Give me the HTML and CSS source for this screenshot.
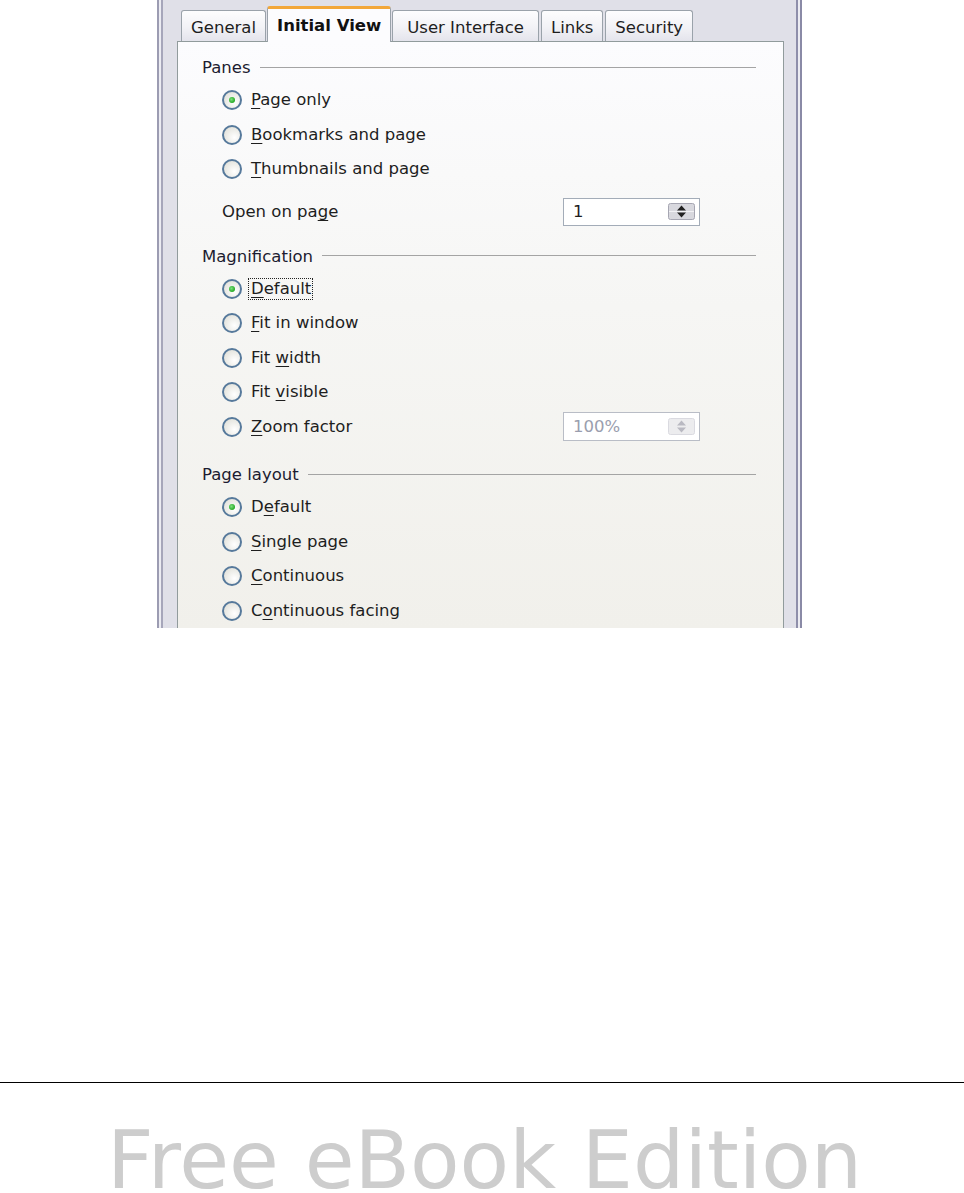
FILE: index.html
```html
<!DOCTYPE html>
<html lang="en">
<head>
    <meta charset="UTF-8">
    <meta name="viewport" content="width=device-width, initial-scale=1.0">
    <title>PDF Options - Initial View</title>
    <link rel="stylesheet" href="styles.css">
</head>
<body>
    <div class="window">
        <div class="window-inner">
            <!-- Tab strip -->
            <div class="tabs">
                <div class="tab">General</div>
                <div class="tab active">Initial View</div>
                <div class="tab wide">User Interface</div>
                <div class="tab">Links</div>
                <div class="tab">Security</div>
            </div>

            <div class="panel">
                <!-- Panes -->
                <div class="group">
                    <div class="group-title">Panes</div>
                    <div class="options">
                        <div class="option"><span class="radio checked"></span><span><u>P</u>age only</span></div>
                        <div class="option"><span class="radio"></span><span><u>B</u>ookmarks and page</span></div>
                        <div class="option"><span class="radio"></span><span><u>T</u>humbnails and page</span></div>
                        <div class="field-row">
                            <span class="field-label">Open on pa<u>g</u>e</span>
                            <div class="spin">
                                <span class="spin-value">1</span>
                                <svg width="27" height="17" viewBox="0 0 27 17">
                                    <rect x="0.5" y="0.5" width="26" height="16" rx="2" fill="#d8d8de" stroke="#a6a6b2"/>
                                    <path d="M1 8.5H26" stroke="#f2f2f5"/>
                                    <path d="M13.5 2.5L18 7.5H9Z M13.5 14.5L18 9.5H9Z" fill="#222"/>
                                </svg>
                            </div>
                        </div>
                    </div>
                </div>

                <!-- Magnification -->
                <div class="group">
                    <div class="group-title">Magnification</div>
                    <div class="options">
                        <div class="option"><span class="radio checked"></span><span class="focus"><u>D</u>efault</span></div>
                        <div class="option"><span class="radio"></span><span><u>F</u>it in window</span></div>
                        <div class="option"><span class="radio"></span><span>Fit <u>w</u>idth</span></div>
                        <div class="option"><span class="radio"></span><span>Fit <u>v</u>isible</span></div>
                        <div class="option">
                            <span class="radio"></span>
                            <span class="field-label"><u>Z</u>oom factor</span>
                            <div class="spin disabled">
                                <span class="spin-value">100%</span>
                                <svg width="27" height="17" viewBox="0 0 27 17">
                                    <rect x="0.5" y="0.5" width="26" height="16" rx="2" fill="#ececee" stroke="#dadae0"/>
                                    <path d="M13.5 2.5L18 7.5H9Z M13.5 14.5L18 9.5H9Z" fill="#b9b9c2"/>
                                </svg>
                            </div>
                        </div>
                    </div>
                </div>

                <!-- Page layout -->
                <div class="group">
                    <div class="group-title">Page layout</div>
                    <div class="options">
                        <div class="option"><span class="radio checked"></span><span>D<u>e</u>fault</span></div>
                        <div class="option"><span class="radio"></span><span><u>S</u>ingle page</span></div>
                        <div class="option"><span class="radio"></span><span><u>C</u>ontinuous</span></div>
                        <div class="option"><span class="radio"></span><span>C<u>o</u>ntinuous facing</span></div>
                    </div>
                </div>
            </div>
        </div>
    </div>

    <div class="footer">Free eBook Edition</div>
</body>
</html>
```

FILE: styles.css
```css
body {
    margin: 0;
    background: #fff;
    font-family: "DejaVu Sans", sans-serif;
}
.window {
    margin-left: 157px;
    width: 645px;
    height: 628px;
    box-sizing: border-box;
    border-left: 2px solid #9c9cb2;
    border-right: 2px solid #8a8aa6;
    padding: 0 2px;
    background: #ececf2;
    overflow: hidden;
}
.window-inner {
    height: 100%;
    box-sizing: border-box;
    border-left: 2px solid #a6a6ba;
    border-right: 2px solid #8e8eaa;
    background: #e0e0e8;
    padding: 0 12px 0 14px;
    display: flex;
    flex-direction: column;
    font-size: 16.5px;
    color: #1e1e1e;
}
.tabs {
    display: flex;
    align-items: flex-end;
    gap: 1px;
    height: 35px;
    padding: 6px 0 0 4px;
}
.tab {
    position: relative;
    height: 31px;
    box-sizing: border-box;
    padding: 4px 9px 0;
    line-height: 26px;
    border: 1px solid #9aa2aa;
    border-bottom: none;
    border-radius: 3px 3px 0 0;
    background: linear-gradient(#fdfdfe, #f2f2f6 55%, #e4e4ec);
    white-space: nowrap;
}
.tab.wide {
    padding: 4px 14px 0;
}
.tab.active {
    height: 36px;
    margin-bottom: -1px;
    z-index: 1;
    font-weight: bold;
    color: #111;
    border-top: 3px solid #f2a73a;
    background: #fcfcfe;
}
.tabs .tab:nth-child(4), .tabs .tab:nth-child(5) {
    margin-left: 1px;
}
.panel {
    flex: 1;
    border: 1px solid #919b9c;
    background: linear-gradient(#fcfcfe, #f6f6f4 45%, #f1f0eb);
    padding: 16px 27px 0 24px;
}
.group + .group {
    margin-top: 21px;
}
.group-title {
    display: flex;
    align-items: center;
    gap: 9px;
    height: 20px;
    line-height: 20px;
    color: #1c1c30;
}
.group-title::after {
    content: "";
    flex: 1;
    border-top: 1px solid #a4a4a4;
    margin-top: -2px;
}
.options {
    padding-left: 20px;
    margin-top: 5px;
}
.option {
    display: flex;
    align-items: center;
    height: 34.5px;
    line-height: 20px;
}
.radio {
    position: relative;
    flex: none;
    width: 20px;
    height: 20px;
    box-sizing: border-box;
    border-radius: 50%;
    border: 2px solid #56799b;
    background: radial-gradient(circle at 65% 65%, #ffffff, #e6e6e0 70%, #d4d4cc);
    margin-right: 9px;
}
.radio.checked::after {
    content: "";
    position: absolute;
    left: 5px;
    top: 5px;
    width: 6px;
    height: 6px;
    border-radius: 50%;
    background: radial-gradient(circle at 40% 40%, #7ee07e, #23a823 70%);
}
u {
    text-underline-offset: 3px;
}
.focus {
    outline: 1px dotted #222;
    padding-left: 2px;
    margin-left: -2px;
    padding-right: 1px;
}
.field-row {
    display: flex;
    align-items: center;
    height: 28px;
    margin-top: 11px;
}
.field-label {
    flex: 1;
}
.spin {
    width: 137px;
    height: 28px;
    box-sizing: border-box;
    margin-right: 56px;
    display: flex;
    align-items: center;
    justify-content: space-between;
    padding: 0 4px 0 9px;
    border: 1px solid #a3acb8;
    background: #fff;
}
.option .spin {
    height: 29px;
}
.spin svg {
    display: block;
}
.spin.disabled {
    border-color: #b9bdc6;
    color: #9a9eae;
}
.footer {
    margin-top: 454px;
    border-top: 1px solid #000;
    padding: 47px 0 0 107px;
    font-size: 81px;
    line-height: 60px;
    color: #cdcdcd;
    white-space: nowrap;
}
```
